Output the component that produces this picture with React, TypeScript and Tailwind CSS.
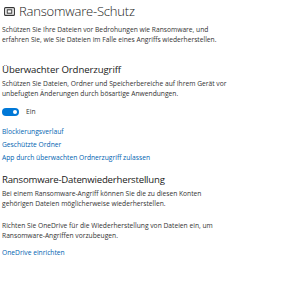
import React from "react";

export default function App() {
  return (
    <div className="w-[300px] h-[300px] bg-white overflow-hidden text-[#1a1a1a]" style={{ fontFamily: '"Open Sans", "Noto Sans", sans-serif' }}>
      <div className="pl-[2px] pt-[2px]">
        <div className="flex items-center h-[19px]">
          <svg width="11" height="9" viewBox="0 0 11 9" className="ml-[2px] mr-[4px]">
            <rect x="0.6" y="0.6" width="9.8" height="7.8" rx="1" fill="none" stroke="#333" strokeWidth="1.1" />
            <rect x="3.2" y="2.8" width="4.6" height="3.4" fill="none" stroke="#333" strokeWidth="1" />
          </svg>
          <span className="text-[13px] font-light leading-none tracking-[-0.2px]">Ransomware-Schutz</span>
        </div>
        <p className="mt-[4px] text-[6.7px] leading-[9.5px] text-[#333]">
          Schützen Sie Ihre Dateien vor Bedrohungen wie Ransomware, und<br />
          erfahren Sie, wie Sie Dateien im Falle eines Angriffs wiederherstellen.
        </p>
        <h2 className="mt-[20px] text-[9.6px] leading-[12px] tracking-[-0.1px]">Überwachter Ordnerzugriff</h2>
        <p className="mt-[3px] text-[6.7px] leading-[9.5px] text-[#333]">
          Schützen Sie Dateien, Ordner und Speicherbereiche auf Ihrem Gerät vor<br />
          unbefugten Änderungen durch bösartige Anwendungen.
        </p>
        <div className="mt-[9px] flex items-center gap-[7px]">
          <div className="w-[17px] h-[8px] rounded-full bg-[#0078d7] flex items-center justify-end pr-[2px]">
            <div className="w-[4px] h-[4px] rounded-full bg-white" />
          </div>
          <span className="text-[6.7px] text-[#333]">Ein</span>
        </div>
        <div className="mt-[10px] flex flex-col gap-[4px] text-[6.7px] leading-[9px] text-[#0063b1]">
          <span>Blockierungsverlauf</span>
          <span>Geschützte Ordner</span>
          <span>App durch überwachten Ordnerzugriff zulassen</span>
        </div>
        <h2 className="mt-[12px] text-[9.6px] leading-[12px] tracking-[-0.2px]">Ransomware-Datenwiederherstellung</h2>
        <p className="mt-[3px] text-[6.7px] leading-[9.5px] text-[#333]">
          Bei einem Ransomware-Angriff können Sie die zu diesen Konten<br />
          gehörigen Dateien möglicherweise wiederherstellen.
        </p>
        <p className="mt-[13px] text-[6.7px] leading-[9.5px] text-[#333]">
          Richten Sie OneDrive für die Wiederherstellung von Dateien ein, um<br />
          Ransomware-Angriffen vorzubeugen.
        </p>
        <div className="mt-[8px] text-[6.7px] leading-[9px] text-[#0063b1]">OneDrive einrichten</div>
      </div>
    </div>
  );
}
